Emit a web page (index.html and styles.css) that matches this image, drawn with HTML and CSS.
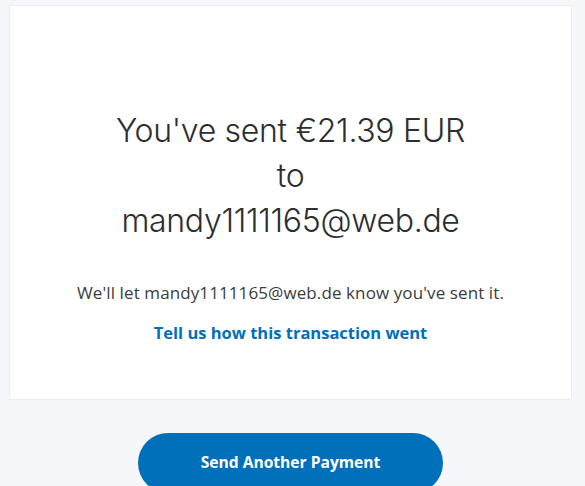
FILE: index.html
```html
<!DOCTYPE html>
<html lang="en">
  <head>
    <meta charset="utf-8">
    <link rel="stylesheet" href="styles.css">
  </head>
  <body>
    <div class="page">
      <div class="card">
        <h1 class="title">You've sent €21.39 EUR<br>to<br>mandy1111165@web.de</h1>
        <p class="note">We'll let mandy1111165@web.de know you've sent it.</p>
        <a class="feedback" href="#">Tell us how this transaction went</a>
      </div>
      <div class="actions">
        <button class="btn">Send Another Payment</button>
      </div>
    </div>
  </body>
</html>
```

FILE: styles.css
```css
html, body { margin: 0; padding: 0; }
body {
  background: #f5f7fa; color: #2c2e2f;
  font: 15px/1.5 "Open Sans", "Noto Sans", Arial, sans-serif;
}
.page { padding: 5px 13px 0 9px; }
.card {
  background: #fff; border: 1px solid #eaeced;
  height: 395px; box-sizing: border-box;
  padding-top: 102px; text-align: center;
}
.title {
  margin: 0; font: 300 32px/45px Inter, "Open Sans", sans-serif;
  font-variant-numeric: proportional-nums;
  letter-spacing: -0.3px; color: #2c2e2f;
}
.note {
  margin: 38px 0 0; font-size: 17px; line-height: 24px;
  letter-spacing: 0.1px; color: #3a3c3e;
}
.feedback {
  display: inline-block; margin-top: 16px;
  color: #0070ba; font-weight: 700; text-decoration: none; font-size: 16.5px;
}
.actions { display: flex; justify-content: center; padding-top: 33px; }
.btn {
  width: 305px; height: 60px; border: none; border-radius: 30px;
  background: #0070ba; color: #fff; cursor: pointer;
  font: 700 15.6px "Open Sans", Arial, sans-serif;
  padding-bottom: 3px;
}
```
